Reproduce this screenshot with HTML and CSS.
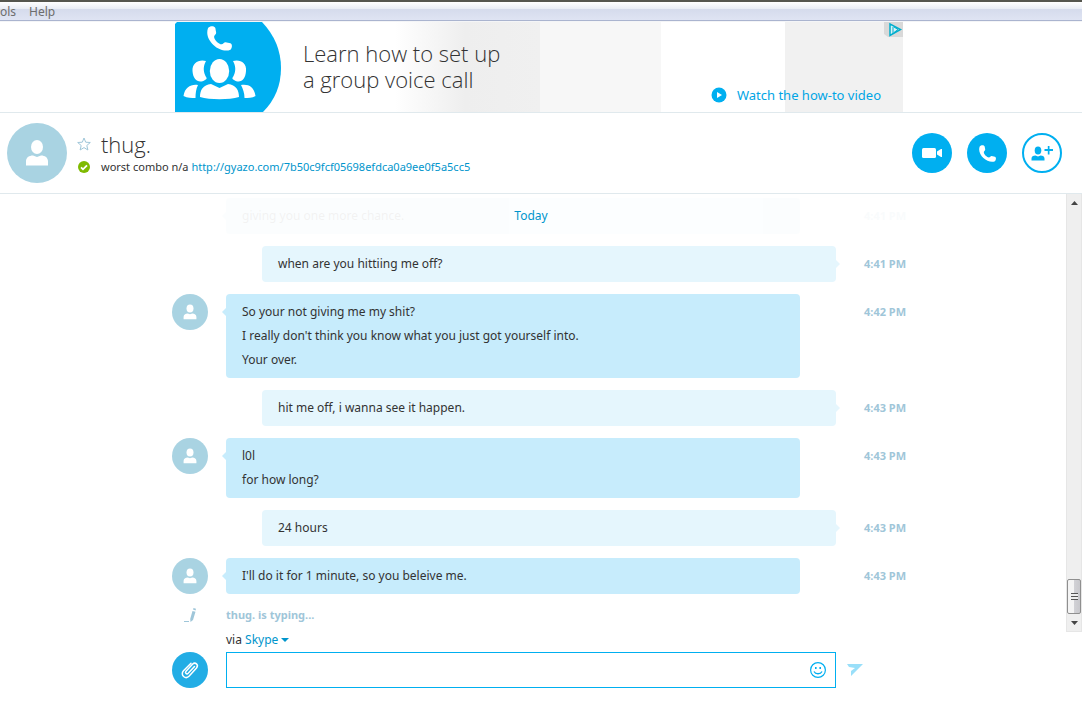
FILE: index.html
```html
<!DOCTYPE html>
<html lang="en">
<head>
<meta charset="utf-8">
<title>thug.</title>
<link rel="stylesheet" href="styles.css">
</head>
<body>
<svg class="defs" aria-hidden="true">
  <symbol id="person" viewBox="0 0 24 26"><ellipse cx="12" cy="7" rx="6" ry="7"/><path d="M1 25.500v-4c0-4 3-6 7-6l4 1.500 4-1.500c4 0 7 2 7 6v4z"/></symbol>
  <symbol id="handset" viewBox="0 0 24 24"><path d="M1 2C3-.5 7-.3 8 2l.8 4.500c0 1.800-2 2.300-2 3.800 0 3 4.500 7.300 7.200 7.300 1.500 0 2.200-2 3.800-2l4.700.9c2 .8 1.800 4.500 0 6.300C13 27-3.500 14 1 2z"/></symbol>
</svg>

<nav class="menubar">
  <button class="menu">ols</button>
  <button class="menu">Help</button>
</nav>

<aside class="ad-strip">
  <div class="ad">
    <svg class="ad-art" viewBox="0 0 106 90" aria-hidden="true">
      <path d="M2 0H87Q106 20 106 46T88 90H0V2Z" fill="#00aff0"/>
      <g fill="#fff">
        <svg x="32" y="4" width="25" height="25"><use href="#handset"/></svg>
        <ellipse cx="44.500" cy="49" rx="9.700" ry="12"/>
        <path d="M25 75c0-7 3-12 11-13l8.500 4 8.500-4c8 1 11 6 11 13-10 3-29 3-39 0z"/>
        <path d="M31 39c-7-2-14 2-13.500 10C18 58 24 62 30 58c2-1 2-2 1-3-3-5-3-11 0-16zM58 39c7-2 14 2 13 10-.5 9-6 13-12 9-2-1-2-2-1-3 3-5 3-11 0-16zM23 63c-7-1-13 2-14.500 11 4 2 8 2 12 2 0-5 .5-9 2.500-13zM66 63c7-1 13 1 14.500 11-3 2-8 2-11 2 0-5-1.500-9-3.500-13z"/>
      </g>
    </svg>
    <p class="ad-title">Learn how to set up<br>a group voice call</p>
    <a class="ad-link" href="#">
      <svg width="16" height="16" viewBox="0 0 16 16" aria-hidden="true"><circle cx="8" cy="8" r="7.500" fill="#00aff0"/><path d="M6 5l5 3-5 3z" fill="#fff"/></svg>
      Watch the how-to video
    </a>
    <button class="ad-choices" aria-label="Ad choices">
      <svg width="19" height="15" viewBox="0 0 19 15" aria-hidden="true"><path d="M0 0h19v15H4L0 12z" fill="#d9d9d9"/><path d="M6 2v11.500L16.500 7.500z" fill="#d9f0f5" stroke="#00aecd" stroke-width="1.500"/><path d="M9 5v7M10 5l4 2.500-4 3" fill="none" stroke="#00aecd"/></svg>
    </button>
  </div>
</aside>

<header class="contact">
  <span class="avatar avatar-large"><svg width="24" height="26" aria-hidden="true"><use href="#person"/></svg></span>
  <div class="identity">
    <button class="star" aria-label="Add to favorites"><svg width="14" height="14" viewBox="0 0 14 14" aria-hidden="true"><path d="M7 1l1.700 4.200 4.600.3-3.500 3 1.100 4.500L7 10.600 3.100 13l1.100-4.500-3.500-3 4.600-.3z" fill="#fff" stroke="#9fc6d9"/></svg></button>
    <h1 class="name">thug.</h1>
    <svg class="status" width="12" height="12" viewBox="0 0 12 12" aria-hidden="true"><circle cx="6" cy="6" r="6" fill="#7fba00"/><path d="M3 6.300l2 2 4-4" fill="none" stroke="#fff" stroke-width="1.800"/></svg>
    <p class="mood">worst combo n/a <a href="#">http://gyazo.com/7b50c9fcf05698efdca0a9ee0f5a5cc5</a></p>
  </div>
  <div class="actions">
    <button class="round" aria-label="Video call"><svg width="20" height="12" viewBox="0 0 20 12" aria-hidden="true"><rect y="1" width="14" height="10" rx="1.500"/><path d="M15 4.500l4-2.500h1v8h-1l-4-2.500z"/></svg></button>
    <button class="round" aria-label="Voice call"><svg width="17" height="17" aria-hidden="true"><use href="#handset"/></svg></button>
    <button class="round outline" aria-label="Add people"><svg width="22" height="15" viewBox="0 0 22 15" aria-hidden="true"><ellipse cx="7" cy="4.500" rx="3.300" ry="4"/><path d="M.5 14.500v-2c0-2 1.500-3 4-3L7 10.500l2.500-1c2.500 0 4 1 4 3v2z"/><path d="M13.500 3h3.300V0h1.700v3H22v2h-3.500v3.500h-1.700V5h-3.300z"/></svg></button>
  </div>
</header>

<main class="conversation">
  <div class="thread">
    <div class="row faded"><div class="bubble theirs"><p>giving you one more chance.</p></div><time>4:41 PM</time></div>
    <div class="day">Today</div>
    <div class="row"><div class="bubble mine"><p>when are you hittiing me off?</p></div><time>4:41 PM</time></div>
    <div class="row"><span class="avatar"><svg width="14" height="16" aria-hidden="true"><use href="#person"/></svg></span><div class="bubble theirs"><p>So your not giving me my shit?</p><p>I really don't think you know what you just got yourself into.</p><p>Your over.</p></div><time>4:42 PM</time></div>
    <div class="row"><div class="bubble mine"><p>hit me off, i wanna see it happen.</p></div><time>4:43 PM</time></div>
    <div class="row"><span class="avatar"><svg width="14" height="16" aria-hidden="true"><use href="#person"/></svg></span><div class="bubble theirs"><p>l0l</p><p>for how long?</p></div><time>4:43 PM</time></div>
    <div class="row"><div class="bubble mine"><p>24 hours</p></div><time>4:43 PM</time></div>
    <div class="row"><span class="avatar"><svg width="14" height="16" aria-hidden="true"><use href="#person"/></svg></span><div class="bubble theirs"><p>I'll do it for 1 minute, so you beleive me.</p></div><time>4:43 PM</time></div>
    <div class="typing">
      <svg width="12" height="15" viewBox="0 0 12 15" aria-hidden="true"><path d="M0 13h5v1H0zM8.500 3l3 .8L9 12l-2.500 2-.3-3zM9 1.500l.5-1.500 2.500.8-.4 1.600z" fill="#9fc6d9"/></svg>
      <span>thug. is typing...</span>
    </div>
  </div>
  <div class="scrollbar" aria-hidden="true">
    <svg width="7" height="4" viewBox="0 0 7 4"><path d="M0 4l3.500-4L7 4z" fill="#444"/></svg>
    <span class="thumb"></span>
    <svg width="7" height="4" viewBox="0 0 7 4"><path d="M0 0h7L3.500 4z" fill="#444"/></svg>
  </div>
</main>

<form class="composer">
  <div class="via">via <button type="button" class="via-service">Skype <svg width="8" height="4" viewBox="0 0 8 4" aria-hidden="true"><path d="M0 0h8L4 4z" fill="#0095cc"/></svg></button></div>
  <button type="button" class="attach" aria-label="Send files"><svg width="20" height="20" viewBox="0 0 20 20" aria-hidden="true"><path d="M14.500 6.500l-6.300 6.800c-1.600 1.500-3.600-.4-2.200-2l6.500-7c2.800-2.800 6.500.6 4 3.600l-7.300 8.200c-3.500 3.700-9.500-.8-5.700-5.300L11 3.200" fill="none" stroke="#fff" stroke-width="1.500" stroke-linecap="round"/></svg></button>
  <div class="field">
    <input type="text" aria-label="Message">
    <button type="button" class="emoji" aria-label="Emoticons"><svg width="16" height="16" viewBox="0 0 16 16" aria-hidden="true"><circle cx="8" cy="8" r="7.400" fill="none" stroke="#00aff0" stroke-width="1.200"/><path d="M5 5h1.600v2H5zM9.400 5H11v2H9.400z" fill="#00aff0"/><path d="M4 9.500c1.500 3 6.500 3 8 0" fill="none" stroke="#00aff0" stroke-width="1.300"/></svg></button>
  </div>
  <button type="submit" class="send" aria-label="Send"><svg width="16" height="12" viewBox="0 0 16 12" aria-hidden="true"><path d="M0 0h16L4 12V7l4-3-6-1z" fill="#99dff9"/></svg></button>
</form>
</body>
</html>
```
FILE: styles.css
```css
* { box-sizing: border-box; }
body {
  margin: 0;
  min-height: 100vh;
  background: #fff;
  color: #333;
  font: 12px/24px "Noto Sans", "Open Sans", sans-serif;
}
p, h1 { margin: 0; }
a { color: #0095cc; text-decoration: none; }
button { padding: 0; border: 0; background: none; color: inherit; font: inherit; }
svg { display: block; flex: none; }
.defs { position: absolute; width: 0; height: 0; }

.menubar {
  display: flex;
  gap: 13px;
  height: 22px;
  border-top: 2px solid #55564f;
  border-bottom: 1px solid #f4f5f7;
  background: linear-gradient(#fff, #e8ecf5 7px, #d5dbec 7px, #dfe4f3 18px, #aab4cf 18px);
}
.menu { color: #6d6d6d; font-size: 12px; line-height: 19px; }

.ad-strip {
  display: flex;
  justify-content: center;
  padding-right: 4px;
  border-bottom: 1px solid #e0e9ed;
}
.ad {
  position: relative;
  display: flex;
  width: 728px;
  height: 90px;
  background: linear-gradient(90deg, #fff 220px, #eee 290px, #f0f0f0 365px, #f7f7f7 365px, #f7f7f7 486px, #fff 486px, #fff 610px, #f1f1f1 610px);
}
.ad-art { width: 106px; height: 90px; }
.ad-title { padding: 18px 0 0 22px; font-family: "Open Sans", sans-serif; font-size: 22px; font-weight: 300; line-height: 26px; }
.ad-link {
  display: flex;
  align-items: center;
  gap: 10px;
  margin: auto 22px 5px auto;
  color: #00a5e5;
  font-size: 13px;
}
.ad-choices { position: absolute; top: 0; right: 0; }

.contact {
  display: flex;
  align-items: center;
  gap: 10px;
  height: 81px;
  padding: 0 20px 0 7px;
  border-bottom: 1px solid #e0e9ed;
}
.avatar {
  display: flex;
  align-items: center;
  justify-content: center;
  width: 36px;
  height: 36px;
  border-radius: 50%;
  background: #a9d3e2;
  fill: #fff;
}
.avatar-large { flex: none; width: 60px; height: 60px; }
.identity {
  display: grid;
  grid-template-columns: 14px auto;
  column-gap: 10px;
  align-items: center;
}
.status { justify-self: center; }
.name { font-family: "Open Sans", sans-serif; font-size: 22px; font-weight: 300; line-height: 28px; }
.mood { font-size: 11px; line-height: 18px; }
.actions { display: flex; gap: 15px; margin-left: auto; }
.round {
  display: flex;
  align-items: center;
  justify-content: center;
  width: 40px;
  height: 40px;
  border-radius: 50%;
  background: #00aff0;
  fill: #fff;
}
.outline { border: 2px solid #00aff0; background: #fff; fill: #00aff0; }

.conversation { display: flex; }
.thread {
  position: relative;
  display: flex;
  flex: 1;
  flex-direction: column;
  gap: 12px;
  padding: 4px 160px 8px 172px;
}
.row {
  display: grid;
  grid-template-columns: 36px 1fr 42px;
  align-items: start;
}
.bubble {
  position: relative;
  grid-column: 2;
  margin: 0 28px 0 18px;
  padding: 6px 16px;
  border-radius: 4px;
}
.theirs { margin-right: 64px; background: #c7ecfc; }
.mine { margin-left: 54px; background: #e5f6fd; }
.bubble::after {
  content: "";
  position: absolute;
  top: 14px;
  border: 4px solid transparent;
}
.theirs::after { right: 100%; border-left-width: 0; border-right-color: #c7ecfc; }
.mine::after { left: 100%; border-right-width: 0; border-left-color: #e5f6fd; }
time { grid-column: 3; padding: 6px 0; color: #9fc6d9; font-size: 11px; font-weight: 700; white-space: nowrap; }
.faded { opacity: .06; }
.day {
  position: absolute;
  top: 10px;
  left: 226px;
  right: 230px;
  color: #0095cc;
  text-align: center;
}
.typing {
  display: grid;
  grid-template-columns: 36px auto;
  column-gap: 18px;
  align-items: center;
  color: #9fc6d9;
  font-size: 11px;
  font-weight: 700;
  line-height: 18px;
}
.typing svg { justify-self: center; }
.scrollbar {
  display: flex;
  flex-direction: column;
  align-items: center;
  width: 16px;
  padding: 7px 0 6px;
  border: 1px solid #e6e6e6;
  border-top: 0;
  background: #efefef;
}
.thumb {
  width: 14px;
  height: 35px;
  margin: auto 0 7px;
  border: 1px solid #8f8f8f;
  border-radius: 2px;
  background:
    repeating-linear-gradient(#555 0 1px, #eee 1px 3px) center / 7px 7px no-repeat,
    linear-gradient(90deg, #f4f4f4 50%, #d2d2d6 50%, #c8c8cc);
}

.composer {
  display: grid;
  grid-template-columns: 36px 1fr 16px;
  align-items: center;
  padding: 0 219px 0 172px;
}
.via { grid-column: 2 / 4; margin-left: 18px; line-height: 16px; padding-bottom: 4px; }
.via-service { display: inline-flex; align-items: center; gap: 3px; color: #0095cc; }
.attach {
  display: flex;
  align-items: center;
  justify-content: center;
  width: 36px;
  height: 36px;
  border-radius: 50%;
  background: #22ade5;
}
.field {
  display: flex;
  align-items: center;
  height: 36px;
  margin: 0 11px 0 18px;
  padding: 0 9px;
  border: 1px solid #00aff0;
}
.field input { flex: 1; min-width: 0; border: 0; outline: 0; font: inherit; }
```
